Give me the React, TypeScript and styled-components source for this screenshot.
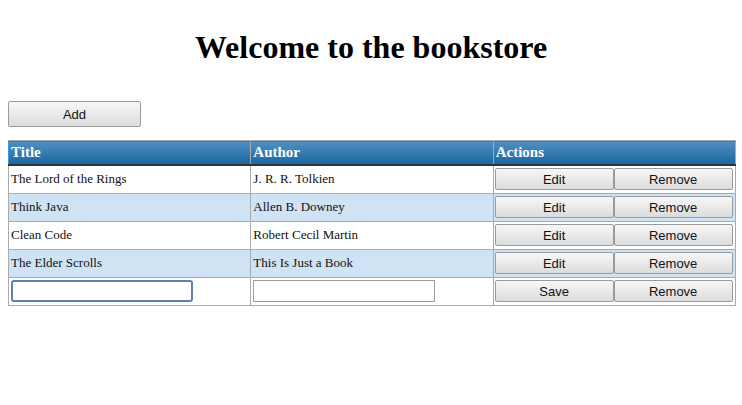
import React from "react";
import styled, { createGlobalStyle } from "styled-components";

const Global = createGlobalStyle`
  html, body { margin: 0; padding: 0; background: #fff; }
  body { font-family: "Liberation Serif", "Times New Roman", serif; }
`;

const Page = styled.div`
  padding: 8px;
  display: flow-root;
`;

const Heading = styled.h1`
  margin: 21px 0 0;
  font-size: 32px;
  line-height: 37px;
  font-weight: bold;
  text-align: center;
  color: #000;
`;

const Toolbar = styled.div`
  margin-top: 35px;
  margin-bottom: 13px;
  display: flex;
`;

const Button = styled.button<{ $wide?: boolean }>`
  font-family: "Liberation Sans", Arial, sans-serif;
  font-size: 13px;
  color: #111;
  background: linear-gradient(#f7f7f7, #dcdcdc);
  border: 1px solid #9a9a9a;
  border-radius: 2px;
  padding: 0;
  height: ${(p) => (p.$wide ? "26px" : "22px")};
  width: ${(p) => (p.$wide ? "133px" : "50%")};
  cursor: pointer;
`;

const Table = styled.table`
  width: 728px;
  border-collapse: collapse;
  table-layout: fixed;
  border: 1px solid #aaa;
`;

const Th = styled.th`
  background: linear-gradient(#5090c2, #1a67a0);
  color: #fff;
  font-family: "Liberation Serif", "Times New Roman", serif;
  font-size: 15px;
  font-weight: bold;
  text-align: left;
  padding: 2px 2px;
  line-height: 19px;
  border: 1px solid #aaa;
  border-bottom: 2px solid #333;
  &:first-child { border-left-color: #3a9ae8; }
`;

const Tr = styled.tr<{ $alt?: boolean }>`
  background: ${(p) => (p.$alt ? "#d0e3f5" : "#fff")};
`;

const Td = styled.td`
  font-family: "Liberation Serif", "Times New Roman", serif;
  font-size: 13px;
  color: #111;
  border: 1px solid #aaa;
  padding: 2px 2px 3px 1px;
  height: 22px;
  vertical-align: middle;
`;

const TextCell = styled(Td)`
  padding: 2px 2px 3px 2px;
`;

const Actions = styled.div`
  display: flex;
  width: 238px;
`;

const Input = styled.input<{ $focused?: boolean }>`
  box-sizing: border-box;
  width: 182px;
  height: 22px;
  margin-left: 1px;
  border: ${(p) => (p.$focused ? "2px solid #5b83ad" : "1px solid #9d9d9d")};
  border-radius: ${(p) => (p.$focused ? "3px" : "0")};
  background: #fff;
  outline: none;
  font-size: 13px;
  padding: 0 2px;
`;

const books = [
  { title: "The Lord of the Rings", author: "J. R. R. Tolkien" },
  { title: "Think Java", author: "Allen B. Downey" },
  { title: "Clean Code", author: "Robert Cecil Martin" },
  { title: "The Elder Scrolls", author: "This Is Just a Book" },
];

export default function App() {
  return (
    <Page>
      <Global />
      <Heading>Welcome to the bookstore</Heading>
      <Toolbar>
        <Button $wide>Add</Button>
      </Toolbar>
      <Table>
        <thead>
          <tr>
            <Th>Title</Th>
            <Th>Author</Th>
            <Th>Actions</Th>
          </tr>
        </thead>
        <tbody>
          {books.map((b, i) => (
            <Tr key={b.title} $alt={i % 2 === 1}>
              <TextCell>{b.title}</TextCell>
              <TextCell>{b.author}</TextCell>
              <Td>
                <Actions>
                  <Button>Edit</Button>
                  <Button>Remove</Button>
                </Actions>
              </Td>
            </Tr>
          ))}
          <Tr>
            <Td>
              <Input $focused />
            </Td>
            <Td>
              <Input />
            </Td>
            <Td>
              <Actions>
                <Button>Save</Button>
                <Button>Remove</Button>
              </Actions>
            </Td>
          </Tr>
        </tbody>
      </Table>
    </Page>
  );
}
